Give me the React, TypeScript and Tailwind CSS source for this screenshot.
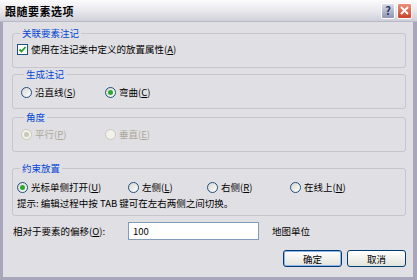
import React from "react"

const font = { fontFamily: '"Noto Sans CJK SC", "Noto Sans", sans-serif' }

function Mn({ text, k, disabled }: { text: string; k: string; disabled?: boolean }) {
  return (
    <span className={disabled ? "text-[#aca899]" : "text-black"}>
      {text}(<span className="underline underline-offset-1">{k}</span>)
    </span>
  )
}

function Radio({ checked, disabled }: { checked?: boolean; disabled?: boolean }) {
  return (
    <span
      className={
        "flex items-center justify-center w-[11px] h-[11px] rounded-full border shrink-0 " +
        (disabled
          ? "border-[#cac8bb] bg-[#f2f1ea]"
          : "border-[#1c5180] bg-gradient-to-br from-[#d8d8d2] to-white")
      }
    >
      {checked && (
        <span
          className={
            "w-[5px] h-[5px] rounded-full " + (disabled ? "bg-[#cac8bb]" : "bg-[#2fa82f]")
          }
        />
      )}
    </span>
  )
}

function RadioItem({
  text,
  k,
  checked,
  disabled,
  w,
}: {
  text: string
  k: string
  checked?: boolean
  disabled?: boolean
  w?: string
}) {
  return (
    <div className={"flex items-center gap-[3px] h-[12px] " + (w ?? "")}>
      <Radio checked={checked} disabled={disabled} />
      <Mn text={text} k={k} disabled={disabled} />
    </div>
  )
}

function Group({
  title,
  h,
  className,
  children,
}: {
  title: string
  h: string
  className?: string
  children: React.ReactNode
}) {
  return (
    <fieldset
      className={"border border-[#c7c5cd] rounded-[3px] w-[394px] " + h + " " + (className ?? "")}
    >
      <legend className="ml-[3px] px-[2px] leading-[12px] text-[#0046d5]">{title}</legend>
      {children}
    </fieldset>
  )
}

export default function App() {
  return (
    <div
      className="w-[417px] h-[280px] bg-[#a7a6ba] text-[9.5px] leading-[12px] text-black"
      style={font}
    >
      {/* title bar */}
      <div className="h-[22px] flex items-center justify-between pl-[5px] pr-[5px] bg-gradient-to-b from-[#fbfbfc] via-[#e9e9ee] to-[#d0cfd9] border-b border-[#b9b8c8]">
        <span className="text-[11px] font-bold tracking-[0.5px]">跟随要素选项</span>
        <div className="flex gap-[2px] items-center">
          <div className="w-[14px] h-[16px] rounded-[2px] border border-white bg-gradient-to-b from-[#d9dcea] to-[#8f96b4] flex items-center justify-center text-[11px] font-bold text-[#2c3460] leading-none">
            ?
          </div>
          <div className="w-[15px] h-[16px] rounded-[2px] border border-white bg-gradient-to-b from-[#ee8f7a] to-[#c8402c] flex items-center justify-center">
            <svg width="9" height="9" viewBox="0 0 9 9">
              <path d="M1 1 L8 8 M8 1 L1 8" stroke="white" strokeWidth="1.8" />
            </svg>
          </div>
        </div>
      </div>

      {/* body */}
      <div className="ml-[3px] mr-[4px] h-[255px] bg-[#e0dfe3] pt-[5px] pl-[9px]">
        <Group title="关联要素注记" h="h-[41px]" className="pt-[4px] pl-[4px]">
          <div className="flex items-center gap-[3px] h-[12px]">
            <span className="w-[11px] h-[11px] border border-[#1c5180] bg-white flex items-center justify-center shrink-0">
              <svg width="9" height="9" viewBox="0 0 9 9">
                <path d="M1.5 4.5 L3.5 6.5 L7.5 2" fill="none" stroke="#21a121" strokeWidth="1.8" />
              </svg>
            </span>
            <Mn text="使用在注记类中定义的放置属性" k="A" />
          </div>
        </Group>

        <Group title="生成注记" h="h-[41px]" className="pt-[6px] pl-[8px]">
          <div className="flex">
            <RadioItem text="沿直线" k="S" w="w-[84px]" />
            <RadioItem text="弯曲" k="C" checked />
          </div>
        </Group>

        <Group title="角度" h="h-[41px]" className="mt-[2px] pt-[5px] pl-[8px]">
          <div className="flex">
            <RadioItem text="平行" k="P" checked disabled w="w-[84px]" />
            <RadioItem text="垂直" k="E" disabled />
          </div>
        </Group>

        <Group title="约束放置" h="h-[54px]" className="mt-[10px] pt-[7px] pl-[4px]">
          <div className="flex">
            <RadioItem text="光标单侧打开" k="U" checked w="w-[111px]" />
            <RadioItem text="左侧" k="L" w="w-[79px]" />
            <RadioItem text="右侧" k="R" w="w-[83px]" />
            <RadioItem text="在线上" k="N" />
          </div>
          <div className="mt-[4px] h-[12px]">提示: 编辑过程中按 TAB 键可在左右两侧之间切换。</div>
        </Group>

        <div className="mt-[6px] flex items-center h-[18px] pl-[1px]">
          <div className="w-[115px]">
            <Mn text="相对于要素的偏移" k="O" />:
          </div>
          <div className="w-[131px] h-[18px] bg-white border border-[#7f9db9] flex items-center pl-[4px]">
            100
          </div>
          <span className="ml-[13px]">地图单位</span>
        </div>

        <div className="mt-[10px] flex justify-end gap-[5px] pr-[7px]">
          <div className="w-[59px] h-[17px] rounded-[3px] border border-[#003c74] bg-gradient-to-b from-white to-[#e3e3dc] flex items-center justify-center shadow-[inset_0_0_0_1px_#8fb2ee]">
            确定
          </div>
          <div className="w-[59px] h-[17px] rounded-[3px] border border-[#003c74] bg-gradient-to-b from-white to-[#e3e3dc] flex items-center justify-center">
            取消
          </div>
        </div>
      </div>
    </div>
  )
}
